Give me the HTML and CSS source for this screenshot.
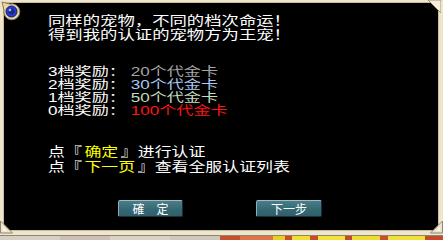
FILE: index.html
```html
<!DOCTYPE html>
<html lang="zh-CN">
<head>
<meta charset="utf-8">
<title>宠物认证</title>
<link rel="stylesheet" href="styles.css">
</head>
<body>
<div class="window">
  <div class="panel">
    <div class="text">
      <div class="intro">
        <p>同样的宠物，不同的档次命运！</p>
        <p>得到我的认证的宠物方为王宠！</p>
      </div>
      <div class="rewards">
        <span class="label">3档奖励：</span><span class="gray">20个代金卡</span>
        <span class="label">2档奖励：</span><span class="blue">30个代金卡</span>
        <span class="label">1档奖励：</span><span class="green">50个代金卡</span>
        <span class="label">0档奖励：</span><span class="red">100个代金卡</span>
      </div>
      <div class="cmds">
        <p>点『<span class="hl">确定</span>』进行认证</p>
        <p>点『<span class="hl">下一页</span>』查看全服认证列表</p>
      </div>
    </div>
    <div class="buttons">
      <button class="btn">確　定</button>
      <button class="btn">下一步</button>
    </div>
  </div>
  <div class="strip"></div>

  <svg class="gem" width="20" height="20" viewBox="0 0 20 20">
    <path d="M1 1 L9 3 A8 8 0 1 1 3 9 Z" fill="#e6d6a8" stroke="#8a7a52" stroke-width="1"/>
    <circle cx="10.5" cy="10.5" r="5.5" fill="#2a3cc8" stroke="#0c1670" stroke-width="1"/>
    <circle cx="10.5" cy="10.5" r="3" fill="#1a2690"/>
    <circle cx="9" cy="9" r="1.3" fill="#a9b6ff"/>
  </svg>
  <svg class="corner tr" width="14" height="14" viewBox="0 0 14 14">
    <polygon points="1,0 14,0 14,13" fill="#f5efdc" stroke="#9b9078" stroke-width="1"/>
  </svg>
  <svg class="corner bl" width="14" height="14" viewBox="0 0 14 14">
    <polygon points="0.5,1 0.5,13 12.5,13" fill="#ece4cd" stroke="#8e8670" stroke-width="1"/>
    <polygon points="3,7 3,11 7,11" fill="#fbf7ea"/>
  </svg>
  <svg class="corner br" width="14" height="14" viewBox="0 0 14 14">
    <polygon points="13.5,1 13.5,13 1.5,13" fill="#ece4cd" stroke="#8e8670" stroke-width="1"/>
    <polygon points="11,7 11,11 7,11" fill="#fbf7ea"/>
  </svg>
</div>
</body>
</html>
```

FILE: styles.css
```css
html, body {
  margin: 0;
  padding: 0;
  background: #000;
}

body {
  width: 443px;
  height: 240px;
  overflow: hidden;
  font-family: "Liberation Sans", "Noto Sans CJK SC", sans-serif;
}

.window {
  position: relative;
  width: 443px;
  height: 240px;
  display: flex;
  flex-direction: column;
  background: #eee5ca;
  overflow: hidden;
}

.panel {
  margin: 3px 5px 5px 4px;
  height: 227px;
  box-sizing: border-box;
  padding: 11px 0 0 44px;
  background: #000;
  box-shadow: 0 0 0 1px #c9bd9e;
  display: flex;
  flex-direction: column;
}

.text {
  width: 260px;
  color: #fff;
  font-size: 13px;
}

.text p {
  margin: 0;
  white-space: nowrap;
}

.intro,
.rewards,
.cmds {
  transform-origin: 0 0;
}

.intro {
  line-height: 14px;
  transform: scaleX(1.335);
}

.rewards {
  margin-top: 24px;
  display: grid;
  grid-template-columns: 58px auto;
  font-size: 12px;
  line-height: 13px;
  white-space: nowrap;
  transform: scaleX(1.425);
}

.gray { color: #a6a6a6; }
.blue { color: #a9c9f2; }
.green { color: #c2dcc0; }
.red { color: #ff1414; }

.cmds {
  margin-top: 26px;
  line-height: 15px;
  transform: scaleX(1.3);
}

.hl {
  color: #ffff00;
  padding: 0 2px;
}

.buttons {
  margin-top: 26px;
  margin-left: 70px;
  display: flex;
  gap: 73px;
}

.btn {
  width: 65px;
  height: 17px;
  box-sizing: border-box;
  padding: 0;
  border: 1px solid;
  border-color: #9dbfc3 #17303a #17303a #8cb0b6;
  border-radius: 2px;
  background: linear-gradient(#4a7d87, #356772 60%, #2f5f6a);
  color: #fff;
  font-family: "Noto Sans CJK SC", sans-serif;
  font-size: 12px;
  line-height: 14px;
}

.btn + .btn {
  width: 66px;
}

.strip {
  height: 5px;
  border-top: 1px solid #8d8576;
  box-sizing: border-box;
  background:
    linear-gradient(to right,
      #d6cfc3 0 60px, #cdbfb8 60px 110px, #d9d3c6 110px 170px, #cfc8be 170px 220px,
      #c5502e 220px 240px, #e0724a 240px 273px,
      #e8d020 273px 285px, #c84c2a 285px 292px, #f0e030 292px 310px, #c84c2a 310px 318px,
      #f2e23a 318px 345px, #c24a2c 345px 352px, #eedc30 352px 380px, #c6502e 380px 388px,
      #f0e038 388px 425px, #c64a2a 425px 443px);
}

.gem {
  position: absolute;
  left: 1px;
  top: 1px;
}

.corner {
  position: absolute;
}

.corner.tr {
  left: 427px;
  top: 0;
}

.corner.bl {
  left: 0;
  top: 220px;
}

.corner.br {
  left: 429px;
  top: 220px;
}
```
